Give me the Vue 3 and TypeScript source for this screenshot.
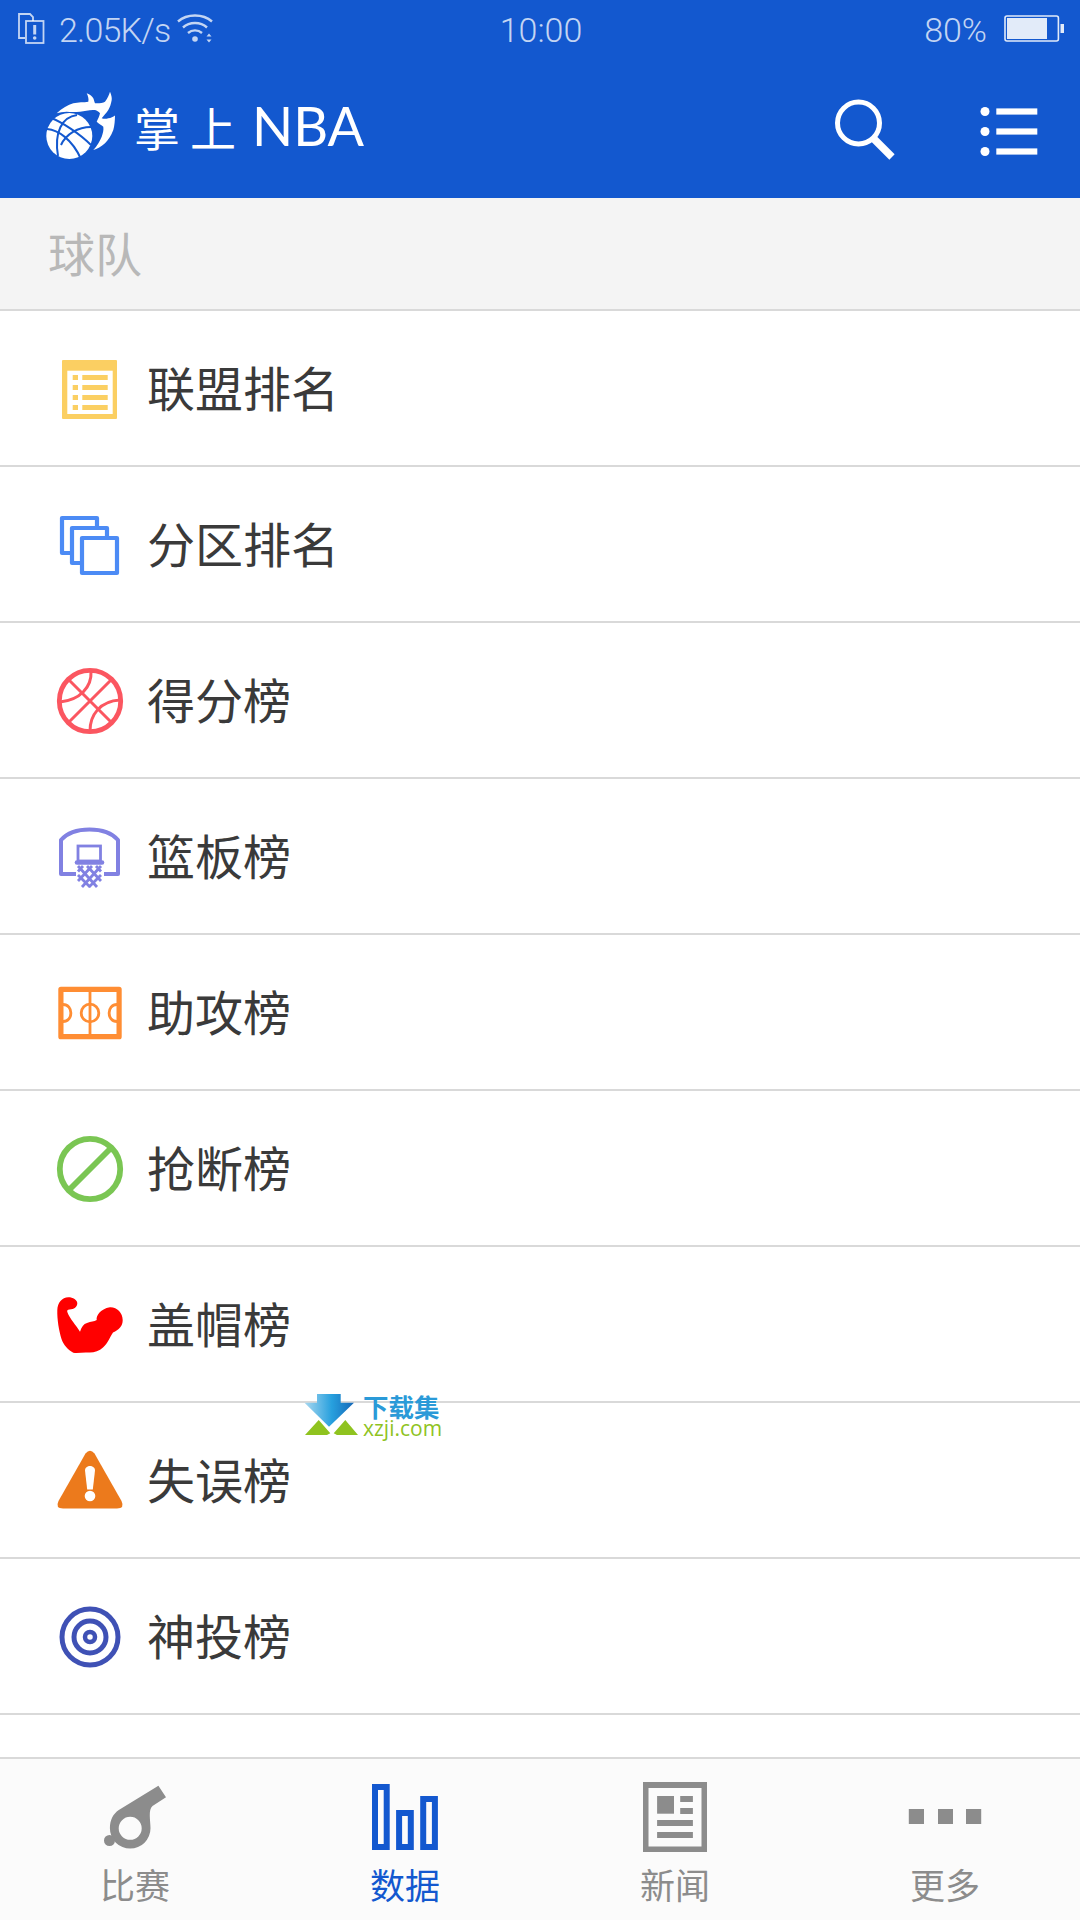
<script setup lang="ts">
interface Row { label: string; icon: string }
const rows: Row[] = [
  { label: '联盟排名', icon: 'list' },
  { label: '分区排名', icon: 'stack' },
  { label: '得分榜', icon: 'ball' },
  { label: '篮板榜', icon: 'hoop' },
  { label: '助攻榜', icon: 'court' },
  { label: '抢断榜', icon: 'ban' },
  { label: '盖帽榜', icon: 'arm' },
  { label: '失误榜', icon: 'warn' },
  { label: '神投榜', icon: 'target' },
]
const tabs = [
  { label: '比赛', icon: 'whistle', active: false },
  { label: '数据', icon: 'bars', active: true },
  { label: '新闻', icon: 'news', active: false },
  { label: '更多', icon: 'dots', active: false },
]
</script>

<template>
  <div class="page">
    <header class="top">
      <div class="status">
        <div class="status-side">
          <svg class="sim" width="27" height="31" viewBox="0 0 27 31" fill="none" stroke="currentColor" stroke-width="1.8">
            <path d="M7 25H1V1h11l3 3v4" />
            <rect x="8" y="8" width="17.500" height="22" />
            <path d="M16.700 12v9.500" stroke-width="3" />
            <circle cx="16.700" cy="25" r="1.800" fill="currentColor" stroke="none" />
          </svg>
          <span class="speed">2.05K/s</span>
          <svg class="wifi" width="36" height="30" viewBox="0 0 36 30" fill="none" stroke="currentColor" stroke-width="2.400">
            <path d="M1 8.500C10 .5 26 .5 35 8.500" />
            <path d="M6 14.500C12.500 8.500 23.500 8.500 30 14.500" />
            <path d="M11 20C15 16.500 21 16.500 25 20" />
            <circle cx="18" cy="26" r="2.800" fill="currentColor" stroke="none" />
            <path d="M29.500 23.500h5l-2.500-3zM29.500 26.500h5l-2.500 3z" fill="currentColor" stroke="none" />
          </svg>
        </div>
        <span class="time">10:00</span>
        <div class="status-side status-right">
          <span class="pct">80%</span>
          <svg width="60" height="27" viewBox="0 0 60 27" class="battery">
            <rect x="1" y="1" width="53.400" height="25" rx="2" fill="none" stroke="currentColor" stroke-width="1.600" />
            <rect x="3" y="3" width="40" height="21" fill="currentColor" />
            <rect x="56.500" y="9" width="3.500" height="9" fill="currentColor" />
          </svg>
        </div>
      </div>
      <div class="bar">
        <svg class="logo-mark" width="72" height="72" viewBox="0 0 72 72">
          <path fill="#fff" d="M12.700 23.300C18 18 24 15 29.300 13.300C34 12 40 12.500 44.300 11.700C45 9 44 6 42.700 3.300C46 4.500 48.500 6.500 49.300 8.300C50 10 50.500 12 51 13.300C55 13.500 59 13 61 11.700C63.500 8.500 65 5 66 1.700C67.500 5 68 8 67.700 10C67 14 66 17 64.300 20C62 23.500 59.500 26 57.700 28.300C60 29 62 29 64.300 28.300C67 28 69 27 71 25.500C71 30 70.500 36 69.300 40C67 46 64 50 61 53.300C57.500 56.500 53 59 49.300 60C53 56 56 51 57.700 46.700C59 43 59.800 40 59.300 36.700C57.500 35 55 34 52.700 31.700C54 29 55.500 26 56 23.300C54.500 21.500 53 20.500 51 20C46 19.500 41 21 36 21.700C31 22 27 22 22.700 21.700C19 22 15.500 22.500 12.700 23.300Z" />
          <circle cx="25.300" cy="46" r="23" fill="#fff" />
          <g fill="none" stroke="#1358cf" stroke-width="2">
            <path d="M3 39C14 40 28 49 37 69" />
            <path d="M7 28C18 32 36 44 47 55" />
            <path d="M33 25C18 27 10 42 14 66" />
            <path d="M47 37C34 37 22 44 17 55" />
          </g>
        </svg>
        <div class="logo-text"><span class="logo-cn">掌上</span><span class="logo-en">NBA</span></div>
        <div class="bar-actions">
          <svg width="64" height="66" viewBox="0 0 64 66" fill="none" stroke="#fff">
            <circle cx="24.500" cy="24" r="21" stroke-width="5" />
            <path d="M39.500 39.500L58 58" stroke-width="7.500" />
          </svg>
          <svg width="64" height="56" viewBox="0 0 64 56" fill="#fff">
            <circle cx="6" cy="7.500" r="4.500" />
            <circle cx="6" cy="27.500" r="4.500" />
            <circle cx="6" cy="47.500" r="4.500" />
            <rect x="17.300" y="4.400" width="41" height="6.200" />
            <rect x="17.300" y="24.400" width="41" height="6.200" />
            <rect x="17.300" y="44.400" width="41" height="6.200" />
          </svg>
        </div>
      </div>
    </header>

    <div class="section">球队</div>

    <main class="list">
      <div v-for="row in rows" :key="row.label" class="row">
        <svg class="row-icon" width="72" height="72" viewBox="0 0 72 72">
          <template v-if="row.icon === 'list'">
            <rect x="8" y="7" width="55" height="59" rx="1" fill="#fbcf62" />
            <rect x="13.300" y="17.700" width="45.400" height="43.300" fill="#fff" />
            <g fill="#fbcf62">
              <rect x="18.700" y="22" width="5.300" height="5" />
              <rect x="18.700" y="32" width="5.300" height="5" />
              <rect x="18.700" y="42" width="5.300" height="5" />
              <rect x="18.700" y="52" width="5.300" height="5" />
              <rect x="28.300" y="22" width="25.400" height="5" />
              <rect x="28.300" y="32" width="25.400" height="5" />
              <rect x="28.300" y="42" width="25.400" height="5" />
              <rect x="28.300" y="52" width="25.400" height="5" />
            </g>
          </template>
          <g v-else-if="row.icon === 'stack'" fill="#fff" stroke="#4c8bf5" stroke-width="4.200" stroke-linejoin="round">
            <rect x="8" y="9" width="35" height="35" />
            <rect x="18" y="19" width="35" height="35" />
            <rect x="28" y="29" width="35" height="35" />
          </g>
          <g v-else-if="row.icon === 'ball'" fill="none" stroke="#fb5660">
            <circle cx="36" cy="36" r="30.700" stroke-width="4.800" />
            <g stroke-width="3">
              <path d="M14 14L58 58M58 14L14 58" />
              <path d="M37 6C38 22 26 35 6 37" />
              <path d="M66 35C46 36 36 50 36 66" />
            </g>
          </g>
          <g v-else-if="row.icon === 'hoop'" fill="none" stroke="#8181e2">
            <path d="M22 53H7V19C14 11 25 8.500 35.500 8.500C46 8.500 57 11 64 19V53H50" stroke-width="4" stroke-linejoin="round" />
            <rect x="24" y="25" width="22.500" height="15" stroke-width="2.800" />
            <path d="M23 41.500H48" stroke-width="4.600" stroke-linecap="round" />
            <path d="M24 45L43 66M33 45L47 60M42 45L47 50.500M24 54L36 66M47 45L28 66M38 45L24 60M29 45L24 50.500M47 54L35 66" stroke-width="2.800" />
          </g>
          <g v-else-if="row.icon === 'court'" fill="none" stroke="#ff8d33">
            <rect x="6.900" y="12.300" width="58.200" height="47.400" stroke-width="5.200" stroke-linejoin="round" />
            <path d="M36 14V58" stroke-width="2.800" />
            <circle cx="36" cy="36" r="8.800" stroke-width="2.800" />
            <path d="M9 27.500C19.500 27.500 19.500 44.500 9 44.500M63 27.500C52.500 27.500 52.500 44.500 63 44.500" stroke-width="2.800" />
          </g>
          <g v-else-if="row.icon === 'ban'" fill="none" stroke="#7ac653" stroke-width="5.800">
            <circle cx="36" cy="36" r="30.200" />
            <path d="M15 57L57 15" />
          </g>
          <path v-else-if="row.icon === 'arm'" fill="#ff0000" d="M3.300 21C3.500 14 8 8.300 14.300 8.300C19 8.300 23.300 11 23.300 14.300C23.300 18 20 20.300 15.500 20.500C13.500 20.600 12.700 21.500 13.500 23.500C16 30 22 36 26 42.700C27.500 38 29.500 35 33 34C37 32.500 40 32.500 42.700 31C42 27 46 20 56 18.300C63 18 68.700 24 68.700 31C68.700 37 65 41 59 43.500C56 48 54 54 49 58.500C45 62.500 39 64 34 63.500C29 63 24 64.500 19.300 63.700C14 61 9.500 56 7.500 50C5 42 3 30 3.300 21Z" />
          <template v-else-if="row.icon === 'warn'">
            <path fill="#ec7a1c" d="M31.500 8.500Q36 3 40.500 8.500L67.500 56Q71 63.500 63 63.500L9 63.500Q1 63.500 4.500 56Z" />
            <path fill="#fff" d="M31 25.500C31 19.500 41 19.500 41 25.500L38.800 44.500H33.200Z" />
            <circle cx="36" cy="51" r="5.300" fill="#fff" />
          </template>
          <g v-else-if="row.icon === 'target'" fill="none" stroke="#3f51b5">
            <circle cx="36" cy="36" r="28" stroke-width="5" />
            <circle cx="36" cy="36" r="16" stroke-width="5" />
            <circle cx="36" cy="36" r="5" stroke-width="4.500" />
          </g>
        </svg>
        <span class="row-label">{{ row.label }}</span>
      </div>
    </main>

    <nav class="tabs">
      <div v-for="tab in tabs" :key="tab.label" class="tab" :class="{ active: tab.active }">
        <svg class="tab-icon" width="80" height="74" viewBox="0 0 80 74">
          <template v-if="tab.icon === 'whistle'">
            <path fill="#8c8c8c" fill-rule="evenodd" d="M63.400 5.700L71 17.300L57.500 26C53 30 55.500 40 55.500 48.300A20.300 20.300 0 0 1 14.900 48.300C14.900 40 18 34 23.800 30ZM46.700 48.300A11.500 11.500 0 1 0 23.700 48.300A11.500 11.500 0 1 0 46.700 48.300Z" />
            <circle cx="14.500" cy="60.500" r="5.500" fill="#8c8c8c" />
          </template>
          <g v-else-if="tab.icon === 'bars'" fill="none" stroke="#1358cf" stroke-width="6">
            <rect x="10" y="7" width="11.700" height="60" />
            <rect x="34.100" y="33" width="11.700" height="34" />
            <rect x="58.200" y="19" width="11.700" height="48" />
          </g>
          <g v-else-if="tab.icon === 'news'" fill="#8c8c8c">
            <path fill-rule="evenodd" d="M8 2H72V72H8ZM13.500 8V66.500H66.500V8Z" />
            <rect x="22.100" y="16" width="16.900" height="17.700" />
            <rect x="45.200" y="16" width="12.700" height="6" />
            <rect x="45.200" y="28" width="12.700" height="6" />
            <rect x="22.100" y="40" width="35.800" height="6" />
            <rect x="22.100" y="52" width="35.800" height="6" />
          </g>
          <g v-else-if="tab.icon === 'dots'" fill="#8c8c8c">
            <rect x="3.800" y="29" width="15.200" height="15" />
            <rect x="33" y="29" width="15" height="15" />
            <rect x="61" y="29" width="15.200" height="15" />
          </g>
        </svg>
        <span class="tab-label">{{ tab.label }}</span>
      </div>
    </nav>

    <div class="watermark">
      <svg width="60" height="43" viewBox="0 0 60 43">
        <defs>
          <linearGradient id="wm" x1="0" x2="1" y1="0" y2="0">
            <stop offset="0" stop-color="#a9d8f0" />
            <stop offset="0.55" stop-color="#27a0de" />
            <stop offset="1" stop-color="#1668b8" />
          </linearGradient>
        </defs>
        <path fill="#8fc31f" d="M15.700 27L27.300 40.300L24 42H2ZM42.300 27L55 42H34L30.700 40.300Z" />
        <path fill="url(#wm)" d="M14 1H37.700V9.700H51L26 33.700L1.500 9.700H14Z" />
      </svg>
      <div class="wm-text">
        <span class="wm-cn">下载集</span>
        <span class="wm-en">xzji.com</span>
      </div>
    </div>
  </div>
</template>

<style scoped>
.page {
  position: relative;
  width: 1080px;
  height: 1920px;
  display: flex;
  flex-direction: column;
  background: #fff;
  overflow: hidden;
  font-family: "Noto Sans CJK SC", "Noto Sans", sans-serif;
}
.top {
  background: #1358cf;
  height: 198px;
  flex: none;
}
.status {
  height: 60px;
  display: flex;
  align-items: center;
  justify-content: space-between;
  color: rgba(255, 255, 255, 0.75);
  font-family: Roboto, "Liberation Sans", sans-serif;
  font-weight: 300;
  font-size: 34px;
  padding: 0 16px 0 18px;
}
.status-side {
  width: 400px;
  display: flex;
  align-items: center;
}
.status-right { justify-content: flex-end; }
.sim { margin-top: -3px; flex: none; }
.speed { margin-left: 14px; line-height: 40px; letter-spacing: -0.8px; }
.wifi { margin-left: 7px; margin-top: -4px; flex: none; }
.time { line-height: 40px; }
.pct { line-height: 40px; }
.battery { margin-left: 17px; margin-top: -4px; color: rgba(255,255,255,0.88); }
.bar {
  height: 138px;
  display: flex;
  align-items: center;
  padding-left: 44px;
}
.logo-mark { margin-top: -6px; flex: none; }
.logo-text {
  display: flex;
  align-items: center;
  margin-left: 18px;
  margin-top: -6px;
  color: #fff;
}
.logo-cn {
  font-size: 46px;
  line-height: 60px;
  letter-spacing: 10px;
}
.logo-en {
  font-family: Lato, "Noto Sans", sans-serif;
  font-size: 54px;
  line-height: 60px;
  margin-left: 6px;
}
.bar-actions {
  margin-left: auto;
  display: flex;
  align-items: center;
  gap: 81px;
  padding-right: 37px;
  padding-top: 5px;
}
.section {
  flex: none;
  height: 111px;
  line-height: 108px;
  padding-left: 48px;
  background: #f4f4f4;
  color: #b8b8b8;
  font-size: 47px;
  border-bottom: 2px solid #d9d9d9;
}
.list {
  flex: 1;
  min-height: 0;
  overflow: hidden;
}
.row {
  box-sizing: border-box;
  height: 156px;
  padding-top: 2px;
  display: flex;
  align-items: center;
  padding-left: 54px;
  border-bottom: 2px solid #d9d9d9;
}
.row-icon { flex: none; }
.row-label {
  margin-left: 21px;
  margin-top: -6px;
  font-size: 48px;
  color: #3a3a3a;
}
.tabs {
  flex: none;
  height: 161px;
  display: grid;
  grid-template-columns: repeat(4, 1fr);
  background: #fbfbfb;
  border-top: 2px solid #d9d9d9;
}
.tab {
  display: flex;
  flex-direction: column;
  align-items: center;
  padding-top: 21px;
  color: #8c8c8c;
}
.tab.active { color: #1358cf; }
.tab-label {
  font-size: 35px;
  line-height: 40px;
  margin-top: 10px;
}
.watermark {
  position: absolute;
  left: 303px;
  top: 1393px;
  display: flex;
  align-items: flex-start;
}
.wm-text {
  display: flex;
  flex-direction: column;
  align-items: flex-start;
}
.wm-cn {
  font-size: 25.500px;
  line-height: 25px;
  font-weight: 700;
  color: #2a9ad8;
}
.wm-en {
  font-family: "Open Sans", "Liberation Sans", sans-serif;
  font-size: 21px;
  line-height: 20px;
  color: #8fc31f;
}
</style>

<style>
html, body { margin: 0; background: #fff; }
</style>
